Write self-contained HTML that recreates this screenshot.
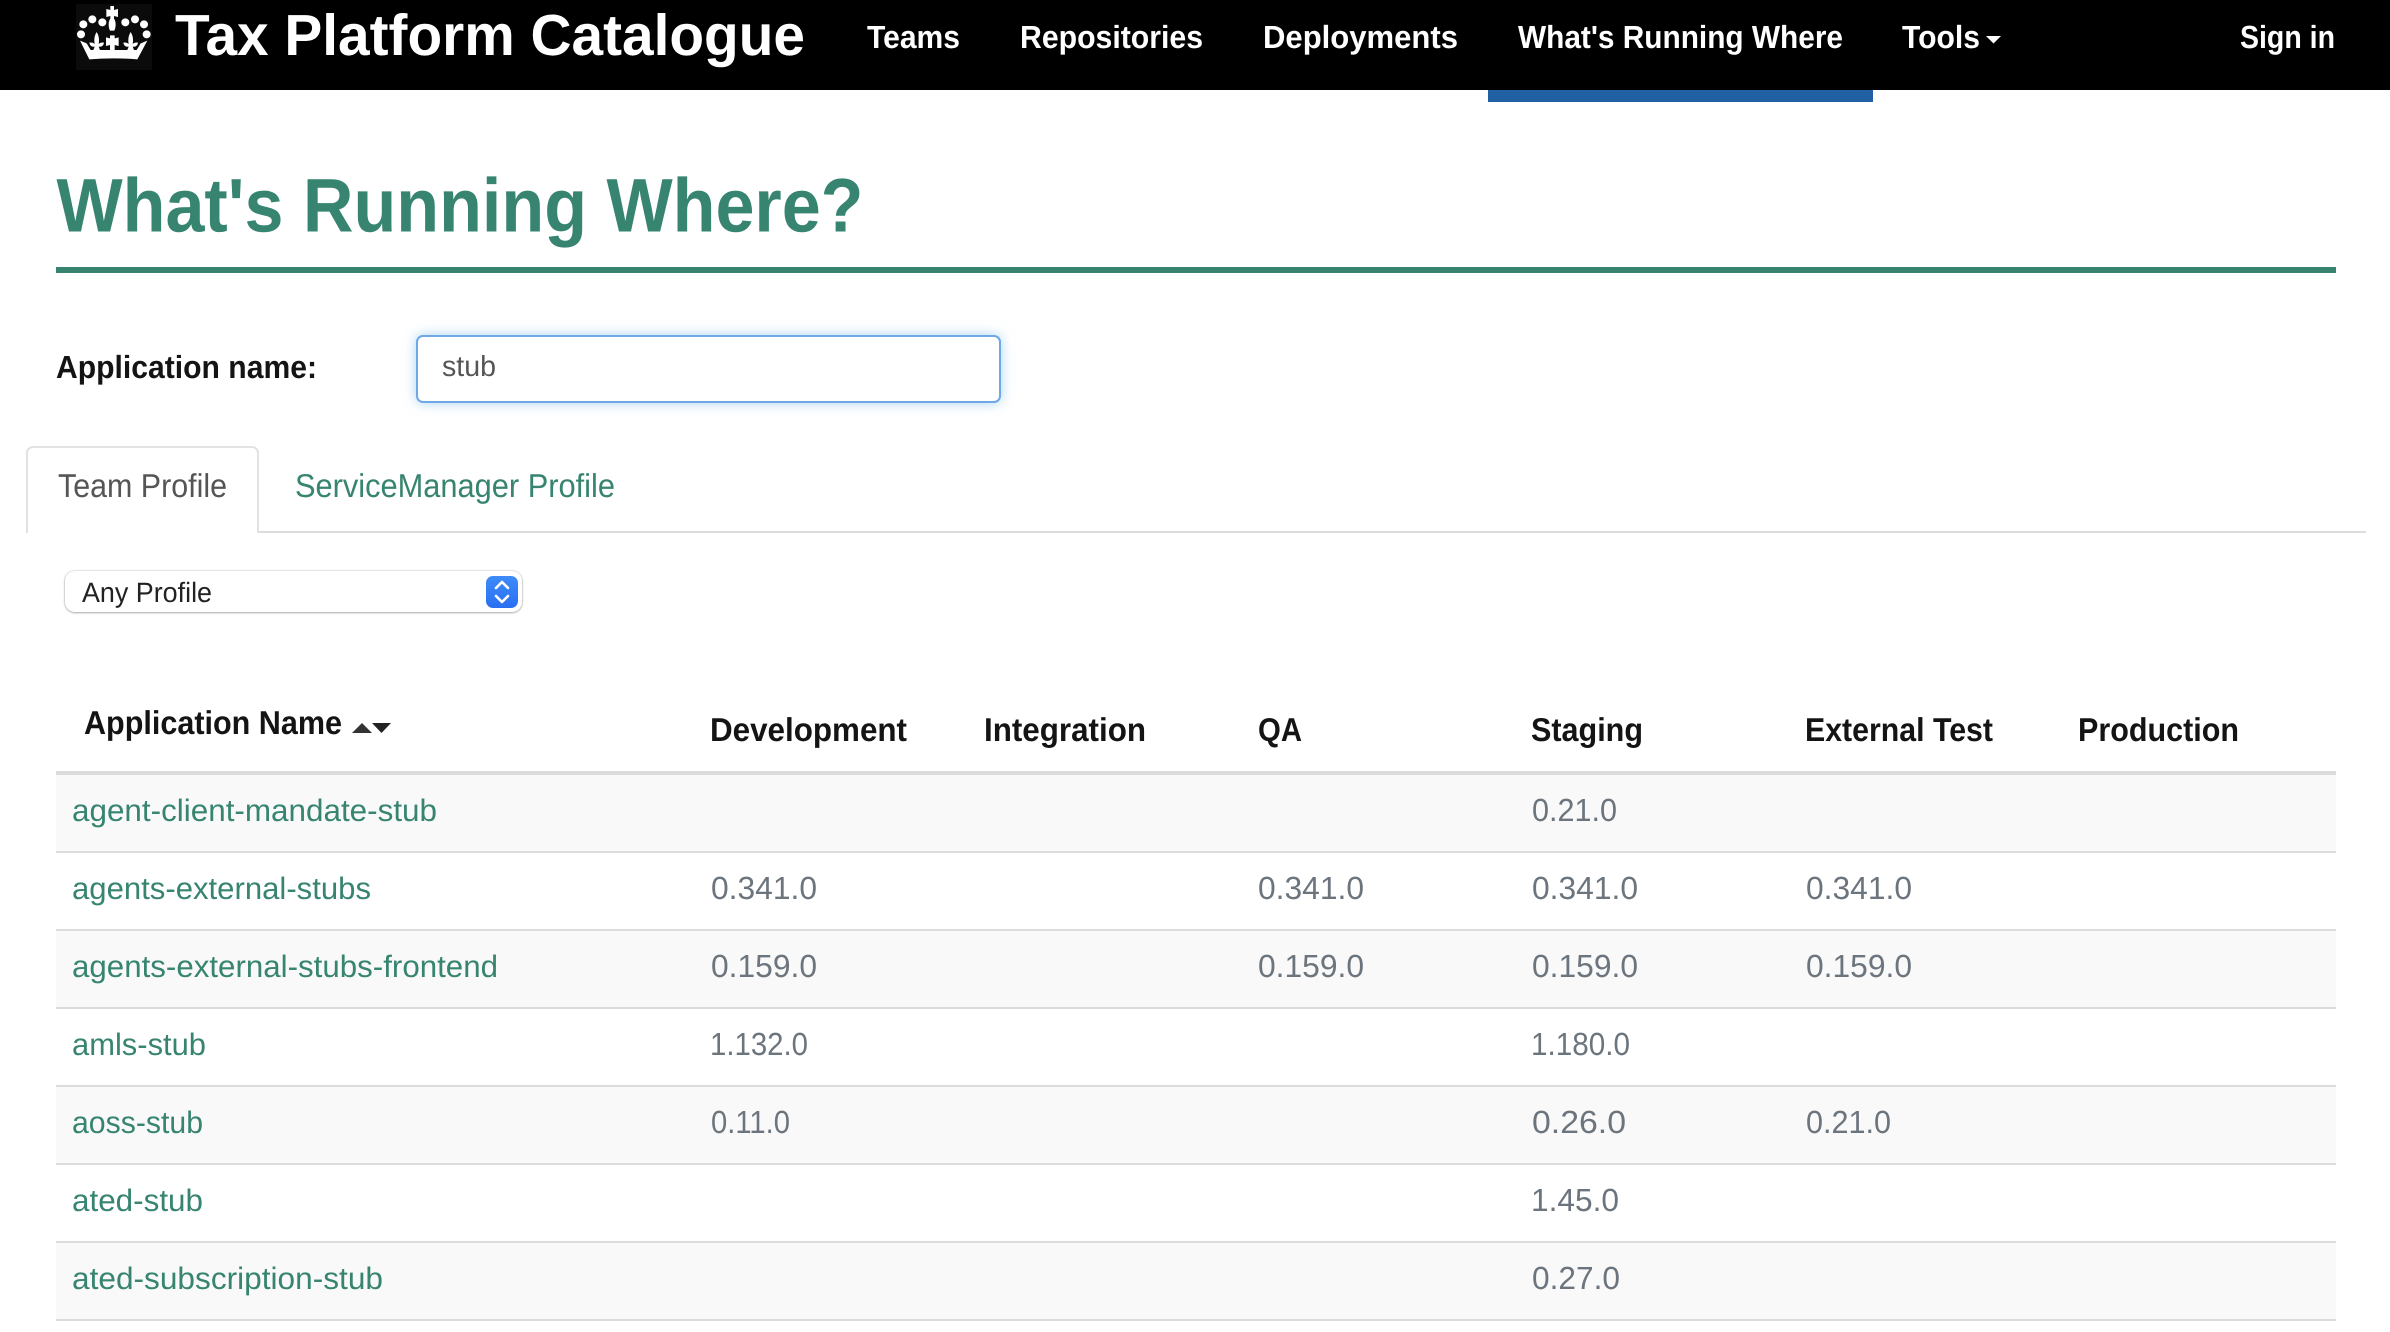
<!DOCTYPE html>
<html lang="en">
<head>
<meta charset="utf-8">
<title>What's Running Where?</title>
<style>
html,body{margin:0;padding:0;background:#fff;}
body{position:relative;width:2390px;height:1332px;overflow:hidden;font-family:"Liberation Sans",sans-serif;}
.abs{position:absolute;}
#hdr{left:0;top:0;width:2390px;height:90px;background:#000;}
#logo{left:76px;top:4px;width:76px;height:66px;background:#0b0b0b;}
#act{left:1488px;top:90px;width:385px;height:12px;background:#2160a2;}
#rule{left:56px;top:267px;width:2280px;height:6px;background:#378470;}
#inp{left:416px;top:335px;width:581px;height:64px;border:2px solid #6ea9e6;border-radius:7px;background:#fff;box-shadow:0 0 12px rgba(102,175,233,.55);}
#tabline{left:27px;top:531px;width:2339px;height:2px;background:#ddd;}
#tab{left:26px;top:446px;width:229px;height:85px;border:2px solid #e2e2e2;border-bottom:none;border-radius:7px 7px 0 0;background:#fff;}
#sel{left:65px;top:571px;width:457px;height:41px;border-radius:10px;background:#fff;box-shadow:0 0 1px 1px rgba(0,0,0,.1),0 1px 2px rgba(0,0,0,.25);}
#selb{left:486px;top:576px;width:32px;height:32px;border-radius:7px;background:linear-gradient(#3d8bf9,#2a6ff2);}
.row{position:absolute;left:56px;width:2280px;height:76px;}
.g{background:#f9f9f9;}
.ln{position:absolute;left:56px;width:2280px;height:2px;background:#dcdcdc;}
svg{position:absolute;left:0;top:0;}
.b{font-weight:bold;}
.h{font-weight:bold;font-size:33px;fill:#141414;}
.n{font-size:31px;fill:#378470;}
.v{font-size:32px;fill:#6c757d;}
.w{font-weight:bold;font-size:32px;fill:#fff;}
</style>
</head>
<body>
<div class="abs" id="hdr"></div>
<div class="abs" id="logo"></div>
<div class="abs" id="act"></div>
<div class="abs" id="rule"></div>
<div class="abs" id="inp"></div>
<div class="abs" id="tabline"></div>
<div class="abs" id="tab"></div>
<div class="abs" id="sel"></div>
<div class="abs" id="selb"></div>

<div class="ln" style="top:771px;height:4px"></div>
<div class="row g" style="top:775px"></div><div class="ln" style="top:851px"></div>
<div class="row" style="top:853px"></div><div class="ln" style="top:929px"></div>
<div class="row g" style="top:931px"></div><div class="ln" style="top:1007px"></div>
<div class="row" style="top:1009px"></div><div class="ln" style="top:1085px"></div>
<div class="row g" style="top:1087px"></div><div class="ln" style="top:1163px"></div>
<div class="row" style="top:1165px"></div><div class="ln" style="top:1241px"></div>
<div class="row g" style="top:1243px"></div><div class="ln" style="top:1319px"></div>

<svg width="2390" height="1332" viewBox="0 0 2390 1332" xmlns="http://www.w3.org/2000/svg" text-rendering="geometricPrecision">
  <defs><filter id="bl" x="-10%" y="-10%" width="120%" height="120%"><feGaussianBlur stdDeviation="1.100"/></filter></defs>
  <!-- crown -->
  <g transform="translate(60 0) scale(.33333)" fill="#fff" filter="url(#bl)">
    <path d="M148 18H162V30L174 27V51L162 48V56C168 64 169 80 163 92H150C144 80 145 64 151 56V48L139 51V27L151 30V18Z"/>
    <circle cx="70" cy="73" r="12"/><circle cx="97" cy="58" r="12"/><circle cx="127" cy="67" r="12"/>
    <circle cx="196" cy="67" r="12"/><circle cx="225" cy="58" r="12"/><circle cx="252" cy="73" r="12"/>
    <circle cx="63" cy="103" r="12"/><circle cx="260" cy="103" r="12"/>
    <path d="M60 122L80 130L92 150H100L104 140Q90 142 88 128Q98 126 104 132Q100 112 110 96Q120 112 116 132Q122 126 132 128Q130 142 116 140L120 150H150V135L138 138V112L150 115V106H164V115L176 112V138L164 135V150H202L206 140Q192 142 190 128Q200 126 206 132Q202 112 212 96Q222 112 218 132Q224 126 234 128Q232 142 218 140L222 150H230L242 130L262 122L232 178Q160 172 88 178Z"/>
  </g>

  <!-- nav -->
  <text x="175" y="55" class="b" font-size="58" fill="#fff" textLength="630" lengthAdjust="spacingAndGlyphs">Tax Platform Catalogue</text>
  <text x="867" y="48" class="w" textLength="93" lengthAdjust="spacingAndGlyphs">Teams</text>
  <text x="1020" y="48" class="w" textLength="183" lengthAdjust="spacingAndGlyphs">Repositories</text>
  <text x="1263" y="48" class="w" textLength="195" lengthAdjust="spacingAndGlyphs">Deployments</text>
  <text x="1518" y="48" class="w" textLength="325" lengthAdjust="spacingAndGlyphs">What's Running Where</text>
  <text x="1902" y="48" class="w" textLength="78" lengthAdjust="spacingAndGlyphs">Tools</text>
  <path d="M1986 36h15l-7.500 7.500z" fill="#fff"/>
  <text x="2240" y="48" class="w" textLength="95" lengthAdjust="spacingAndGlyphs">Sign in</text>

  <!-- heading -->
  <text x="56.500" y="231.500" class="b" font-size="76" fill="#378470" textLength="807" lengthAdjust="spacingAndGlyphs">What's Running Where?</text>

  <!-- form -->
  <text x="56" y="378" class="b" font-size="32" fill="#141414" textLength="261" lengthAdjust="spacingAndGlyphs">Application name:</text>
  <text x="442" y="376" font-size="29" fill="#555" textLength="54" lengthAdjust="spacingAndGlyphs">stub</text>

  <!-- tabs -->
  <text x="58" y="497" font-size="33" fill="#555" textLength="169" lengthAdjust="spacingAndGlyphs">Team Profile</text>
  <text x="295" y="497" font-size="33" fill="#378470" textLength="320" lengthAdjust="spacingAndGlyphs">ServiceManager Profile</text>

  <!-- select -->
  <text x="82" y="602" font-size="28" fill="#222" textLength="130" lengthAdjust="spacingAndGlyphs">Any Profile</text>
  <path d="M496 588l6-6 6 6M496 596l6 6 6-6" fill="none" stroke="#fff" stroke-width="2.600" stroke-linecap="round" stroke-linejoin="round"/>

  <!-- table head -->
  <text x="84" y="734" class="h" textLength="258" lengthAdjust="spacingAndGlyphs">Application Name</text>
  <path d="M352 733l10-10 10 10z" fill="#333"/><path d="M372 723h19l-9.500 10z" fill="#222"/>
  <text x="710" y="741" class="h" textLength="197" lengthAdjust="spacingAndGlyphs">Development</text>
  <text x="984" y="741" class="h" textLength="162" lengthAdjust="spacingAndGlyphs">Integration</text>
  <text x="1258" y="741" class="h" textLength="44" lengthAdjust="spacingAndGlyphs">QA</text>
  <text x="1531" y="741" class="h" textLength="112" lengthAdjust="spacingAndGlyphs">Staging</text>
  <text x="1805" y="741" class="h" textLength="188" lengthAdjust="spacingAndGlyphs">External Test</text>
  <text x="2078" y="741" class="h" textLength="161" lengthAdjust="spacingAndGlyphs">Production</text>

  <!-- rows -->
  <text x="72" y="821" class="n" textLength="365" lengthAdjust="spacingAndGlyphs">agent-client-mandate-stub</text>
  <text x="1532" y="821" class="v" textLength="85" lengthAdjust="spacingAndGlyphs">0.21.0</text>

  <text x="72" y="899" class="n" textLength="299" lengthAdjust="spacingAndGlyphs">agents-external-stubs</text>
  <text x="711" y="899" class="v" textLength="106" lengthAdjust="spacingAndGlyphs">0.341.0</text>
  <text x="1258" y="899" class="v" textLength="106" lengthAdjust="spacingAndGlyphs">0.341.0</text>
  <text x="1532" y="899" class="v" textLength="106" lengthAdjust="spacingAndGlyphs">0.341.0</text>
  <text x="1806" y="899" class="v" textLength="106" lengthAdjust="spacingAndGlyphs">0.341.0</text>

  <text x="72" y="977" class="n" textLength="426" lengthAdjust="spacingAndGlyphs">agents-external-stubs-frontend</text>
  <text x="711" y="977" class="v" textLength="106" lengthAdjust="spacingAndGlyphs">0.159.0</text>
  <text x="1258" y="977" class="v" textLength="106" lengthAdjust="spacingAndGlyphs">0.159.0</text>
  <text x="1532" y="977" class="v" textLength="106" lengthAdjust="spacingAndGlyphs">0.159.0</text>
  <text x="1806" y="977" class="v" textLength="106" lengthAdjust="spacingAndGlyphs">0.159.0</text>

  <text x="72" y="1055" class="n" textLength="134" lengthAdjust="spacingAndGlyphs">amls-stub</text>
  <text x="710" y="1055" class="v" textLength="98" lengthAdjust="spacingAndGlyphs">1.132.0</text>
  <text x="1531" y="1055" class="v" textLength="99" lengthAdjust="spacingAndGlyphs">1.180.0</text>

  <text x="72" y="1133" class="n" textLength="131" lengthAdjust="spacingAndGlyphs">aoss-stub</text>
  <text x="711" y="1133" class="v" textLength="79" lengthAdjust="spacingAndGlyphs">0.11.0</text>
  <text x="1532" y="1133" class="v" textLength="94" lengthAdjust="spacingAndGlyphs">0.26.0</text>
  <text x="1806" y="1133" class="v" textLength="85" lengthAdjust="spacingAndGlyphs">0.21.0</text>

  <text x="72" y="1211" class="n" textLength="131" lengthAdjust="spacingAndGlyphs">ated-stub</text>
  <text x="1531" y="1211" class="v" textLength="88" lengthAdjust="spacingAndGlyphs">1.45.0</text>

  <text x="72" y="1289" class="n" textLength="311" lengthAdjust="spacingAndGlyphs">ated-subscription-stub</text>
  <text x="1532" y="1289" class="v" textLength="88" lengthAdjust="spacingAndGlyphs">0.27.0</text>
</svg>
</body>
</html>
